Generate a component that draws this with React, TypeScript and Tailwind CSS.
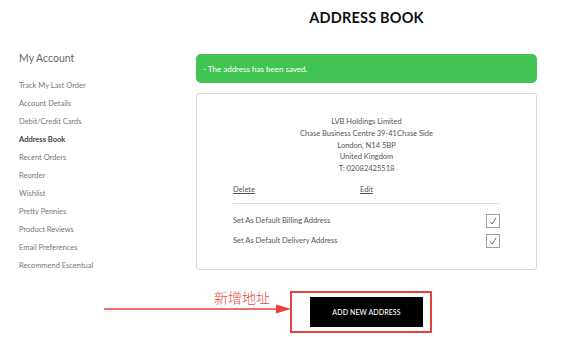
import React from 'react';

const menu = [
  'Track My Last Order',
  'Account Details',
  'Debit/Credit Cards',
  'Address Book',
  'Recent Orders',
  'Reorder',
  'Wishlist',
  'Pretty Pennies',
  'Product Reviews',
  'Email Preferences',
  'Recommend Escentual',
];

const address = [
  'LVB Holdings Limited',
  'Chase Business Centre 39-41Chase Side',
  'London, N14 5BP',
  'United Kingdom',
  'T: 02082425518',
];

const CheckBox: React.FC = () => (
  <span className="flex h-[14px] w-[14px] items-center justify-center border border-[#a0a0a0] bg-white">
    <svg width="8" height="8" viewBox="0 0 10 10" fill="none">
      <path d="M1.5 6 L4 8.8 L8.8 1" stroke="#333" strokeWidth="0.9" />
    </svg>
  </span>
);

const App: React.FC = () => {
  return (
    <div className="relative flex h-[337px] w-[577px] overflow-hidden bg-white font-['Lato','Liberation_Sans',sans-serif] text-[#555]">
      {/* Sidebar */}
      <div className="w-[196px] pl-[19px] pt-[51px]">
        <div className="mb-[12px] text-[10.5px] leading-[14px] text-[#666]">My Account</div>
        <ul className="flex flex-col">
          {menu.map(item => (
            <li
              key={item}
              className={`text-[7.5px] leading-[18px] ${item === 'Address Book' ? 'font-bold text-[#444]' : 'text-[#777]'}`}
            >
              {item}
            </li>
          ))}
        </ul>
      </div>

      {/* Main */}
      <div className="flex w-[341px] flex-col pt-[9px]">
        <h1 className="text-center text-[14.5px] font-bold leading-[18px] tracking-[0.2px] text-[#111]">ADDRESS BOOK</h1>

        <div className="mt-[27px] flex h-[29px] items-center rounded-[5px] bg-[#42c452] px-[7px] text-[8px] text-white">
          - The address has been saved.
        </div>

        <div className="mt-[10px] h-[177px] rounded-[3px] border border-[#d9d9d9] px-[36px] pt-[22px]">
          <div className="flex flex-col items-center">
            {address.map(line => (
              <div key={line} className="text-[7.5px] leading-[11.8px] text-[#555]">
                {line}
              </div>
            ))}
          </div>

          <div className="mt-[9px] flex text-[7.5px] leading-[12px] text-[#555]">
            <span className="w-[127px] underline">Delete</span>
            <span className="underline">Edit</span>
          </div>

          <div className="mt-[7px] border-t border-[#e0e0e0]" />

          <div className="mt-[10px] flex flex-col gap-[6px]">
            <div className="flex items-center justify-between text-[7.5px] text-[#555]">
              <span>Set As Default Billing Address</span>
              <CheckBox />
            </div>
            <div className="flex items-center justify-between text-[7.5px] text-[#555]">
              <span>Set As Default Delivery Address</span>
              <CheckBox />
            </div>
          </div>
        </div>

        <div className="mt-[21px] flex pl-[94px]">
          <div className="border-2 border-[#e8403f] py-[4px] pl-[18px] pr-[7px]">
            <button className="block h-[30px] w-[113px] bg-black text-[7px] font-medium tracking-[0.1px] text-white">
              ADD NEW ADDRESS
            </button>
          </div>
        </div>
      </div>

      {/* annotation */}
      <div className="absolute left-[214px] top-[288px] font-['Noto_Sans_CJK_SC',serif] text-[14px] font-light leading-[18px] text-[#e84a48]">
        新增地址
      </div>
      <svg className="absolute left-[104px] top-[303px]" width="188" height="12" viewBox="0 0 188 12">
        <line x1="0" y1="6" x2="176" y2="6" stroke="#e8403f" strokeWidth="1.3" />
        <path d="M172 1.5 L187 6 L172 10.5 Z" fill="#e8403f" />
      </svg>
    </div>
  );
};

export default App;
